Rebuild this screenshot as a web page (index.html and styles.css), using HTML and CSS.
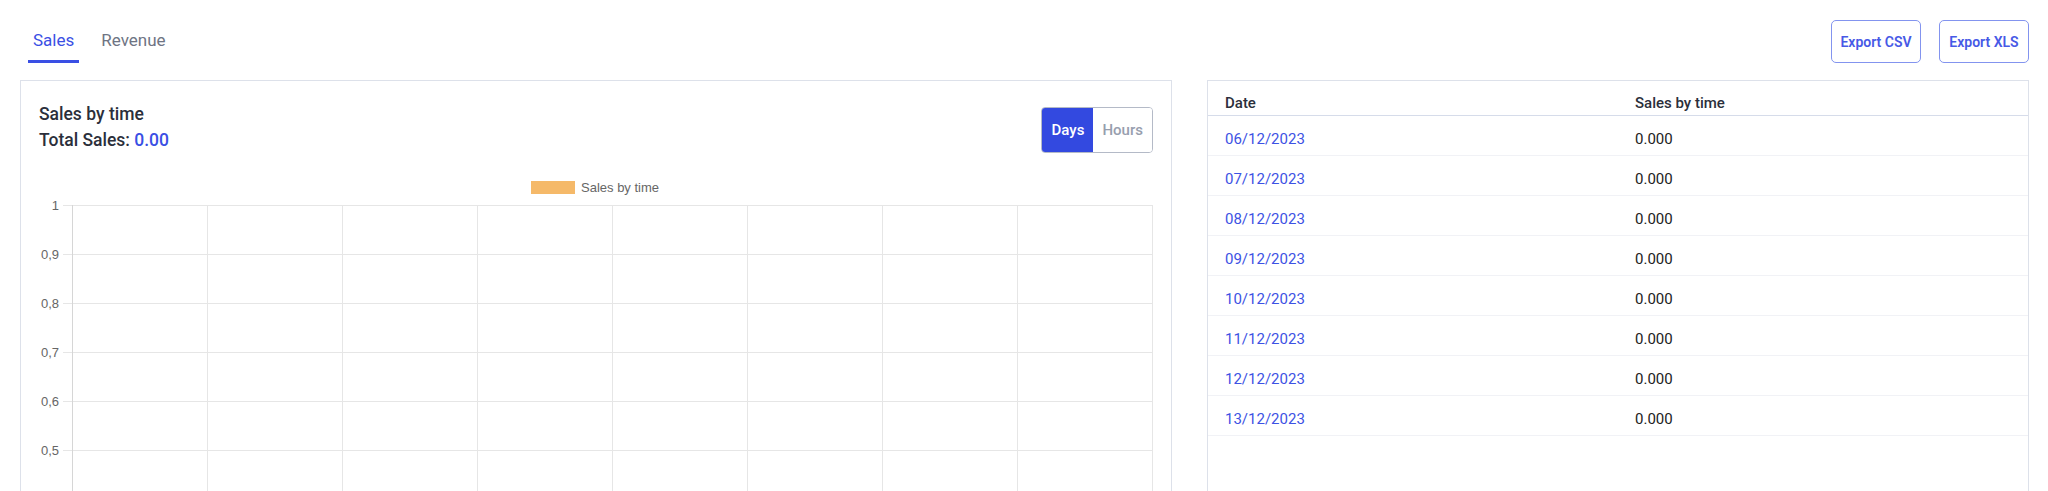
FILE: index.html
```html
<!DOCTYPE html>
<html lang="en">
<head>
    <meta charset="UTF-8">
    <meta name="viewport" content="width=device-width, initial-scale=1.0">
    <title>Sales report</title>
    <link rel="stylesheet" href="styles.css">
</head>
<body>
    <div id="topbar">
        <nav class="tabs">
            <a class="tab active">Sales</a>
            <a class="tab">Revenue</a>
        </nav>
        <div class="exports">
            <button class="btn-export">Export CSV</button>
            <button class="btn-export">Export XLS</button>
        </div>
    </div>

    <div id="reportRow">
        <section class="card chart-card">
            <div class="chart-head">
                <div>
                    <h2 class="chart-title">Sales by time</h2>
                    <p class="chart-total">Total Sales: <span class="total-value">0.00</span></p>
                </div>
                <div class="toggle">
                    <button class="toggle-btn on">Days</button>
                    <button class="toggle-btn">Hours</button>
                </div>
            </div>
            <!-- chart drawn like the canvas output: legend, y labels, grid -->
            <svg class="chart" width="1114" height="340" viewBox="0 0 1114 340" shape-rendering="crispEdges">
                <rect x="492" y="28" width="44" height="13" fill="#f5b969"/>
                <text class="legend" x="542" y="39">Sales by time</text>

                <g stroke="#e6e6e6" stroke-width="1">
                    <line x1="24" y1="52.5" x2="1114" y2="52.5"/>
                    <line x1="24" y1="101.5" x2="1114" y2="101.5"/>
                    <line x1="24" y1="150.5" x2="1114" y2="150.5"/>
                    <line x1="24" y1="199.5" x2="1114" y2="199.5"/>
                    <line x1="24" y1="248.5" x2="1114" y2="248.5"/>
                    <line x1="24" y1="297.5" x2="1114" y2="297.5"/>

                    <line x1="168.5" y1="52" x2="168.5" y2="340"/>
                    <line x1="303.5" y1="52" x2="303.5" y2="340"/>
                    <line x1="438.5" y1="52" x2="438.5" y2="340"/>
                    <line x1="573.5" y1="52" x2="573.5" y2="340"/>
                    <line x1="708.5" y1="52" x2="708.5" y2="340"/>
                    <line x1="843.5" y1="52" x2="843.5" y2="340"/>
                    <line x1="978.5" y1="52" x2="978.5" y2="340"/>
                    <line x1="1113.5" y1="52" x2="1113.5" y2="340"/>
                </g>
                <line x1="33.5" y1="52" x2="33.5" y2="340" stroke="#d6d6d6"/>

                <g class="ticks" text-anchor="end">
                    <text x="20" y="57">1</text>
                    <text x="20" y="106">0,9</text>
                    <text x="20" y="155">0,8</text>
                    <text x="20" y="204">0,7</text>
                    <text x="20" y="253">0,6</text>
                    <text x="20" y="302">0,5</text>
                </g>
            </svg>
        </section>

        <section class="card table-card">
            <table class="sales-table">
                <thead>
                    <tr><th>Date</th><th>Sales by time</th></tr>
                </thead>
                <tbody>
                    <tr><td><a class="date-link">06/12/2023</a></td><td>0.000</td></tr>
                    <tr><td><a class="date-link">07/12/2023</a></td><td>0.000</td></tr>
                    <tr><td><a class="date-link">08/12/2023</a></td><td>0.000</td></tr>
                    <tr><td><a class="date-link">09/12/2023</a></td><td>0.000</td></tr>
                    <tr><td><a class="date-link">10/12/2023</a></td><td>0.000</td></tr>
                    <tr><td><a class="date-link">11/12/2023</a></td><td>0.000</td></tr>
                    <tr><td><a class="date-link">12/12/2023</a></td><td>0.000</td></tr>
                    <tr><td><a class="date-link">13/12/2023</a></td><td>0.000</td></tr>
                </tbody>
            </table>
        </section>
    </div>
</body>
</html>
```

FILE: styles.css
```css
body {
    font-family: Roboto, "Noto Sans", Arial, sans-serif;
    margin: 0;
    padding: 20px 19px 0 20px;
    background-color: #fff;
    color: #2b2f3b;
    overflow: hidden;
}
#topbar {
    display: flex;
    justify-content: space-between;
    align-items: flex-start;
    margin-bottom: 17px;
}
.tabs {
    display: flex;
    gap: 17px;
    padding-left: 8px;
}
.tab {
    display: block;
    padding: 0 5px;
    height: 40px;
    line-height: 40px;
    font-size: 17px;
    color: #6e7483;
    border-bottom: 3px solid transparent;
    cursor: pointer;
}
.tab.active {
    color: #3a4fe4;
    border-bottom-color: #3a4fe4;
}
.exports {
    display: flex;
    gap: 18px;
}
.btn-export {
    width: 90px;
    height: 43px;
    padding: 0;
    background-color: #fff;
    border: 1px solid #8394ef;
    border-radius: 5px;
    color: #4759e6;
    font-family: inherit;
    font-size: 14px;
    font-weight: 600;
    cursor: pointer;
}
#reportRow {
    display: grid;
    grid-template-columns: 7fr 5fr;
    gap: 35px;
    align-items: start;
}
.card {
    background-color: #fff;
    border: 1px solid #dde1ea;
    height: 520px;
}
.chart-card {
    padding: 20px 18px 0 18px;
}
.chart-head {
    display: flex;
    justify-content: space-between;
    align-items: flex-start;
}
.chart-title {
    margin: 0;
    font-size: 17.5px;
    font-weight: 500;
    line-height: 26px;
}
.chart-total {
    margin: 0;
    font-size: 17.5px;
    font-weight: 500;
    line-height: 26px;
}
.total-value {
    color: #3a4fe4;
}
.toggle {
    display: flex;
    margin-top: 6px;
    border: 1px solid #b4bac7;
    border-radius: 4px;
    overflow: hidden;
}
.toggle-btn {
    height: 44px;
    padding: 0 9px;
    border: none;
    background-color: #fff;
    color: #979eae;
    font-family: inherit;
    font-size: 15px;
    font-weight: 500;
    cursor: pointer;
}
.toggle-btn.on {
    background-color: #3349e0;
    color: #fff;
    width: 51px;
}
.chart {
    display: block;
}
.chart text {
    font-family: "Liberation Sans", Arial, sans-serif;
    font-size: 13px;
    fill: #666;
}
.sales-table {
    width: 100%;
    border-collapse: collapse;
    table-layout: fixed;
}
.sales-table th {
    text-align: left;
    padding: 14px 17px 4px;
    line-height: 16px;
    font-size: 15px;
    font-weight: 500;
    color: #2b2f3b;
    border-bottom: 1px solid #d6dcea;
}
.sales-table td {
    padding: 15px 17px 8px;
    line-height: 16px;
    font-size: 15px;
    color: #222;
    border-bottom: 1px solid #f1f2f6;
}
.date-link {
    color: #3d52e4;
    cursor: pointer;
}
```
